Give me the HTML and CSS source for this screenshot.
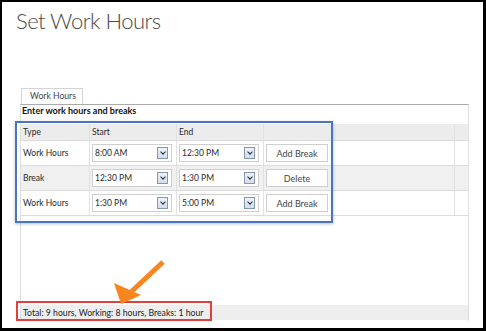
FILE: index.html
```html
<!DOCTYPE html>
<html lang="en">
<head>
    <meta charset="UTF-8">
    <title>Set Work Hours</title>
    <link rel="stylesheet" href="styles.css">
</head>
<body>
    <div class="frame">
        <h1>Set Work Hours</h1>
        <div class="panel">
            <div class="tabs">
                <div class="tab">Work Hours</div>
            </div>
            <div class="panel-body">
                <div class="caption">Enter work hours and breaks</div>
                <table class="grid">
                    <thead>
                        <tr>
                            <th class="col-type">Type</th>
                            <th class="col-start">Start</th>
                            <th class="col-end">End</th>
                            <th class="col-action"></th>
                            <th class="col-gutter"></th>
                        </tr>
                    </thead>
                    <tbody>
                        <tr>
                            <td>Work Hours</td>
                            <td><div class="combo"><span>8:00 AM</span><i class="drop"></i></div></td>
                            <td><div class="combo"><span>12:30 PM</span><i class="drop"></i></div></td>
                            <td><button class="grid-btn">Add Break</button></td>
                            <td></td>
                        </tr>
                        <tr class="alt">
                            <td>Break</td>
                            <td><div class="combo"><span>12:30 PM</span><i class="drop"></i></div></td>
                            <td><div class="combo"><span>1:30 PM</span><i class="drop"></i></div></td>
                            <td><button class="grid-btn">Delete</button></td>
                            <td></td>
                        </tr>
                        <tr>
                            <td>Work Hours</td>
                            <td><div class="combo"><span>1:30 PM</span><i class="drop"></i></div></td>
                            <td><div class="combo"><span>5:00 PM</span><i class="drop"></i></div></td>
                            <td><button class="grid-btn">Add Break</button></td>
                            <td></td>
                        </tr>
                    </tbody>
                </table>
                <div class="filler"></div>
                <div class="status">Total: 9 hours, Working: 8 hours, Breaks: 1 hour</div>
            </div>
        </div>

        <!-- annotations drawn over the screen -->
        <div class="mark-blue"></div>
        <div class="mark-red"></div>
        <svg class="arrow" width="80" height="60" viewBox="100 255 80 60">
            <line x1="163" y1="262" x2="131" y2="292" stroke="#f7861f" stroke-width="5"/>
            <polygon points="121,304 114,283 141,295" fill="#f7861f"/>
        </svg>
    </div>
</body>
</html>
```

FILE: styles.css
```css
body {
    margin: 0;
    background: #fff;
    font-family: Lato, "Open Sans", sans-serif;
    color: #333;
}

.frame {
    position: relative;
    width: 486px;
    height: 331px;
    box-sizing: border-box;
    border-style: solid;
    border-color: #000;
    border-width: 2px 3px 3px 2px;
    background: #fff;
}

h1 {
    margin: 5px 0 0 14px;
    font-size: 22px;
    line-height: 28px;
    font-weight: 300;
    letter-spacing: -0.5px;
    color: #4a4a4a;
}

.panel {
    margin: 53px 0 0 18px;
    width: 449px;
}

.tabs {
    display: flex;
    padding-left: 1px;
}

.tab {
    width: 62px;
    height: 16px;
    box-sizing: border-box;
    border: 1px solid #d4d4d4;
    border-bottom: none;
    font-size: 8.6px;
    line-height: 15px;
    padding-left: 8px;
    color: #444;
}

.panel-body {
    display: flex;
    flex-direction: column;
    height: 217px;
    box-sizing: border-box;
    border-top: 1px solid #aaa;
    border-left: 1px solid #ddd;
    border-right: 1px solid #ddd;
}

.caption {
    font-size: 9px;
    font-weight: bold;
    color: #111;
    line-height: 12px;
    padding-left: 1px;
}

.grid {
    margin-top: 7px;
    width: 448px;
    border-collapse: collapse;
    table-layout: fixed;
    font-size: 8.5px;
}

.grid th,
.grid td {
    border-right: 1px solid #e2e2e2;
    border-bottom: 1px solid #dcdcdc;
    padding: 0 0 0 2px;
    text-align: left;
    font-weight: normal;
    color: #2a2a2a;
}

.grid th {
    height: 16px;
    background: #ececec;
}

.grid td {
    height: 24px;
}

.grid tr.alt td {
    background: #f0f0f0;
}

.col-type { width: 66px; }
.col-start { width: 84px; }
.col-end { width: 84px; }
.col-action { width: 188px; }

.combo {
    display: flex;
    align-items: center;
    width: 80px;
    height: 18px;
    box-sizing: border-box;
    border: 1px solid #cfcfcf;
    background: #fff;
    padding-left: 2px;
}

.combo span {
    flex: 1;
}

.drop {
    width: 11px;
    height: 12px;
    margin-right: 3px;
    box-sizing: border-box;
    border: 1px solid #8898ac;
    background: linear-gradient(#eef2f8, #d3dcea);
    position: relative;
}

.drop::after {
    content: '';
    position: absolute;
    left: 2.5px;
    top: 1.5px;
    width: 3px;
    height: 3px;
    border-right: 1.5px solid #1e2a44;
    border-bottom: 1.5px solid #1e2a44;
    transform: rotate(45deg);
}

.grid-btn {
    width: 62px;
    height: 18px;
    padding: 0;
    border: 1px solid #cfcfcf;
    background: #fff;
    font-family: inherit;
    font-size: 9px;
    color: #444;
}

.filler {
    flex: 1;
}

.status {
    height: 15px;
    margin-bottom: 1px;
    background: #eeeeee;
    font-size: 8.7px;
    line-height: 15px;
    padding-left: 2px;
    color: #222;
}

.mark-blue {
    position: absolute;
    left: 13px;
    top: 119px;
    width: 318px;
    height: 102px;
    box-sizing: border-box;
    border: 2px solid #4a74c9;
    box-shadow: 0 1px 3px rgba(0, 0, 0, 0.25);
}

.mark-red {
    position: absolute;
    left: 14px;
    top: 299px;
    width: 196px;
    height: 20px;
    box-sizing: border-box;
    border: 2px solid #e2403c;
}

.arrow {
    position: absolute;
    left: 98px;
    top: 253px;
}
```
